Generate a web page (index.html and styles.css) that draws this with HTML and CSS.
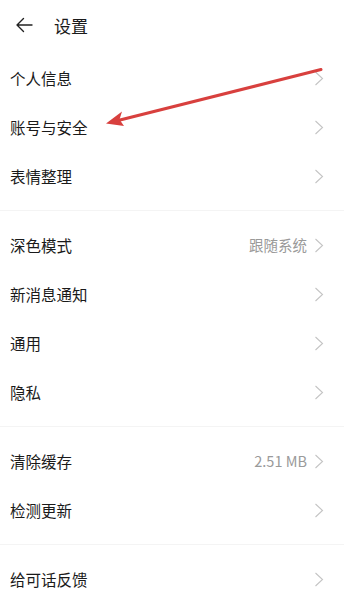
FILE: index.html
```html
<!DOCTYPE html>
<html lang="zh-CN">
<head>
<meta charset="utf-8">
<title>设置</title>
<link rel="stylesheet" href="styles.css">
</head>
<body>
<div class="page">
  <header class="header">
    <svg class="back" width="18" height="16" viewBox="0 0 18 16"><path d="M17 8H2M8.5 1.5L2 8l6.5 6.5" fill="none" stroke="#222" stroke-width="1.4" stroke-linecap="round" stroke-linejoin="round"/></svg>
    <span class="title">设置</span>
  </header>

  <section class="group">
    <div class="row"><span class="label">个人信息</span><span class="right"><svg class="chev" width="10" height="15" viewBox="0 0 10 15"><path d="M1.5 1l7 6.5-7 6.5" fill="none" stroke="#c4c4c4" stroke-width="1.1"/></svg></span></div>
    <div class="row"><span class="label">账号与安全</span><span class="right"><svg class="chev" width="10" height="15" viewBox="0 0 10 15"><path d="M1.5 1l7 6.5-7 6.5" fill="none" stroke="#c4c4c4" stroke-width="1.1"/></svg></span></div>
    <div class="row"><span class="label">表情整理</span><span class="right"><svg class="chev" width="10" height="15" viewBox="0 0 10 15"><path d="M1.5 1l7 6.5-7 6.5" fill="none" stroke="#c4c4c4" stroke-width="1.1"/></svg></span></div>
  </section>
  <div class="sep"></div>
  <section class="group">
    <div class="row"><span class="label">深色模式</span><span class="right"><span class="value">跟随系统</span><svg class="chev" width="10" height="15" viewBox="0 0 10 15"><path d="M1.5 1l7 6.5-7 6.5" fill="none" stroke="#c4c4c4" stroke-width="1.1"/></svg></span></div>
    <div class="row"><span class="label">新消息通知</span><span class="right"><svg class="chev" width="10" height="15" viewBox="0 0 10 15"><path d="M1.5 1l7 6.5-7 6.5" fill="none" stroke="#c4c4c4" stroke-width="1.1"/></svg></span></div>
    <div class="row"><span class="label">通用</span><span class="right"><svg class="chev" width="10" height="15" viewBox="0 0 10 15"><path d="M1.5 1l7 6.5-7 6.5" fill="none" stroke="#c4c4c4" stroke-width="1.1"/></svg></span></div>
    <div class="row"><span class="label">隐私</span><span class="right"><svg class="chev" width="10" height="15" viewBox="0 0 10 15"><path d="M1.5 1l7 6.5-7 6.5" fill="none" stroke="#c4c4c4" stroke-width="1.1"/></svg></span></div>
  </section>
  <div class="sep"></div>
  <section class="group">
    <div class="row"><span class="label">清除缓存</span><span class="right"><span class="value">2.51 MB</span><svg class="chev" width="10" height="15" viewBox="0 0 10 15"><path d="M1.5 1l7 6.5-7 6.5" fill="none" stroke="#c4c4c4" stroke-width="1.1"/></svg></span></div>
    <div class="row"><span class="label">检测更新</span><span class="right"><svg class="chev" width="10" height="15" viewBox="0 0 10 15"><path d="M1.5 1l7 6.5-7 6.5" fill="none" stroke="#c4c4c4" stroke-width="1.1"/></svg></span></div>
  </section>
  <div class="sep"></div>
  <section class="group">
    <div class="row"><span class="label">给可话反馈</span><span class="right"><svg class="chev" width="10" height="15" viewBox="0 0 10 15"><path d="M1.5 1l7 6.5-7 6.5" fill="none" stroke="#c4c4c4" stroke-width="1.1"/></svg></span></div>
  </section>

  <svg class="annot" width="344" height="600" viewBox="0 0 344 600">
    <line x1="321" y1="69.5" x2="118" y2="120.5" stroke="#d8403e" stroke-width="3" stroke-linecap="round"/>
    <polygon points="106,123.5 122,111.5 119.5,119.5 124,126" fill="#d8403e"/>
  </svg>
</div>
</body>
</html>
```

FILE: styles.css
```css
html, body {
  margin: 0;
  padding: 0;
  background: #ffffff;
}
body {
  font-family: "Noto Sans CJK SC", "Noto Sans", "Liberation Sans", sans-serif;
  color: #1f1f1f;
}
.page {
  position: relative;
  width: 344px;
  height: 600px;
  overflow: hidden;
}
.header {
  height: 54px;
  display: flex;
  align-items: center;
  padding: 0 0 4px 15px;
  box-sizing: border-box;
}
.back {
  display: block;
}
.title {
  margin-left: 21px;
  font-size: 17px;
  line-height: 1;
  color: #1a1a1a;
}
.group {
  display: flex;
  flex-direction: column;
}
.row {
  height: 49px;
  display: flex;
  align-items: center;
  justify-content: space-between;
  padding: 0 20px 0 10px;
  box-sizing: border-box;
}
.label {
  font-size: 15.5px;
  line-height: 1;
  color: #1a1a1a;
}
.right {
  display: flex;
  align-items: center;
  gap: 7px;
}
.value {
  font-size: 14.5px;
  line-height: 1;
  color: #9a9a9a;
  font-family: "Noto Sans CJK SC", "Roboto", sans-serif;
}
.chev {
  display: block;
}
.sep {
  height: 1px;
  background: #f4f4f4;
  margin: 9px 0 10px;
}
.annot {
  position: absolute;
  left: 0;
  top: 0;
  pointer-events: none;
}
```
